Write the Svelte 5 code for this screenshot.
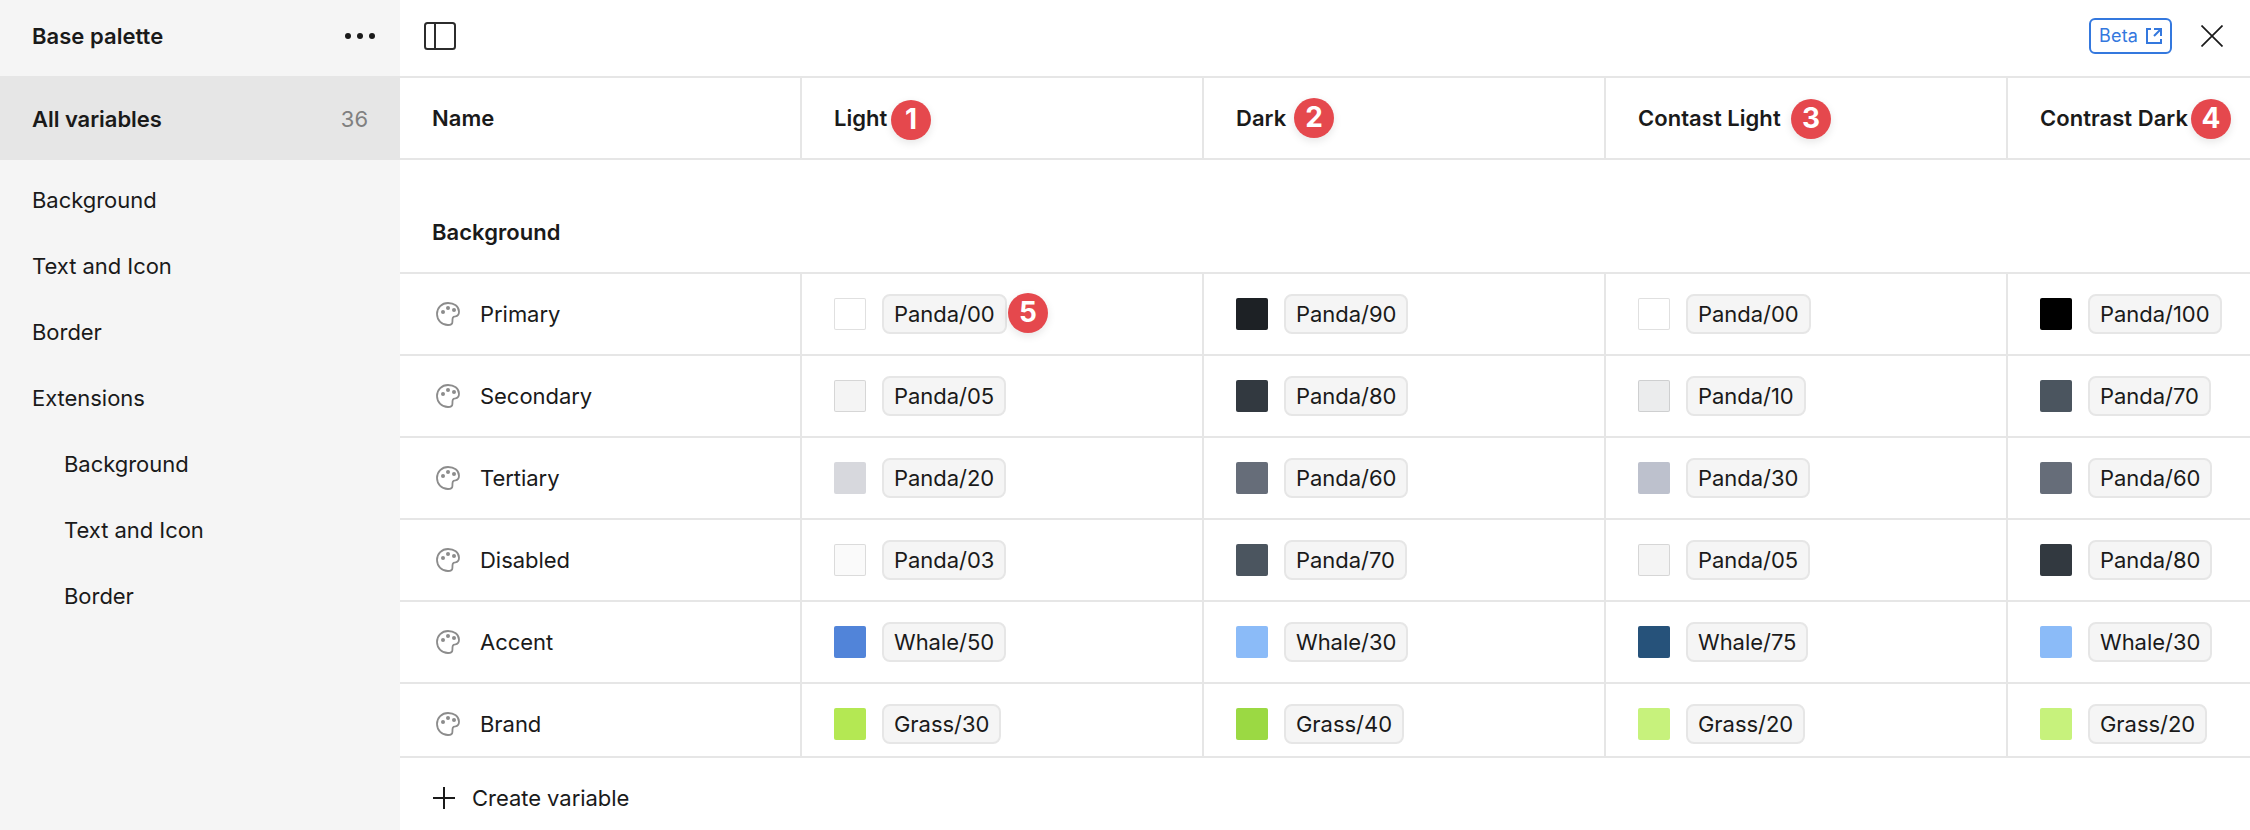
<script>
  const groups = [
    { label: 'Background' },
    { label: 'Text and Icon' },
    { label: 'Border' },
    { label: 'Extensions' },
    { label: 'Background', nested: true },
    { label: 'Text and Icon', nested: true },
    { label: 'Border', nested: true }
  ];

  const modes = [
    { label: 'Light', step: 1, x: 89, y: 22 },
    { label: 'Dark', step: 2, x: 90, y: 19.5 },
    { label: 'Contast Light', step: 3, x: 185, y: 21 },
    { label: 'Contrast Dark', step: 4, x: 183, y: 20.7 }
  ];

  const colors = {
    'Panda/00': '#ffffff',
    'Panda/03': '#fafafa',
    'Panda/05': '#f4f4f4',
    'Panda/10': '#ebeced',
    'Panda/20': '#d7d8dd',
    'Panda/30': '#bdc1cd',
    'Panda/60': '#666d79',
    'Panda/70': '#4b555f',
    'Panda/80': '#323940',
    'Panda/90': '#1d2125',
    'Panda/100': '#000000',
    'Whale/30': '#8bbbf8',
    'Whale/50': '#5184d9',
    'Whale/75': '#26527a',
    'Grass/20': '#c7f27c',
    'Grass/30': '#b4e853',
    'Grass/40': '#9bd943'
  };
  const outlined = ['Panda/00', 'Panda/03', 'Panda/05', 'Panda/10'];

  const rows = [
    { name: 'Primary', values: ['Panda/00', 'Panda/90', 'Panda/00', 'Panda/100'] },
    { name: 'Secondary', values: ['Panda/05', 'Panda/80', 'Panda/10', 'Panda/70'] },
    { name: 'Tertiary', values: ['Panda/20', 'Panda/60', 'Panda/30', 'Panda/60'] },
    { name: 'Disabled', values: ['Panda/03', 'Panda/70', 'Panda/05', 'Panda/80'] },
    { name: 'Accent', values: ['Whale/50', 'Whale/30', 'Whale/75', 'Whale/30'] },
    { name: 'Brand', values: ['Grass/30', 'Grass/40', 'Grass/20', 'Grass/20'] }
  ];
</script>

<div class="app">
  <aside>
    <header class="side-head">
      <span>Base palette</span>
      <svg width="32" height="8" viewBox="0 0 32 8" fill="#1a1a1a">
        <circle cx="4" cy="4" r="3" /><circle cx="16" cy="4" r="3" /><circle cx="28" cy="4" r="3" />
      </svg>
    </header>
    <div class="all"><span>All variables</span><span class="count">36</span></div>
    <nav>
      {#each groups as g}
        <div class="group" class:nested={g.nested}><span>{g.label}</span></div>
      {/each}
    </nav>
  </aside>

  <main>
    <header class="toolbar">
      <svg width="32" height="28" viewBox="0 0 32 28" fill="none" stroke="#2c2c2c" stroke-width="2">
        <rect x="1" y="1" width="30" height="26" rx="2.5" /><path d="M11 1v26" />
      </svg>
      <div class="tools">
        <div class="beta">
          <span>Beta</span>
          <svg width="16" height="16" viewBox="0 0 16 16" fill="none" stroke="#3478de" stroke-width="2">
            <path d="M5 1H1v14h14v-4M8 1h7v7M15 1 8 8" />
          </svg>
        </div>
        <svg width="22" height="22" viewBox="0 0 22 22" stroke="#1a1a1a" stroke-width="1.7">
          <path d="M.5.5l21 21M21.5.5l-21 21" />
        </svg>
      </div>
    </header>

    <div class="table">
      <div class="row head">
        <div class="cell name"><span>Name</span></div>
        {#each modes as m}
          <div class="cell">
            <span>{m.label}</span>
            <b class="step" style="left: {m.x}px; top: {m.y}px">{m.step}</b>
          </div>
        {/each}
      </div>
      <div class="section"><span>Background</span></div>
      {#each rows as r, i}
        <div class="row">
          <div class="cell name">
            <svg class="palette" width="24" height="24" viewBox="0 0 24 24">
              <path d="M12 1C5.800 1 1 5.900 1 12s4.800 11 11 11c2.700 0 4.400-1 4.400-3 0-4 .2-5.500 3-5.700C21.800 14 23 12.200 23 9.700 23 4.300 18 1 12 1Z" fill="none" stroke="#8c8c8c" stroke-width="1.8" />
              <g fill="#8c8c8c"><circle cx="7" cy="10" r="2" /><circle cx="12" cy="6" r="2" /><circle cx="18" cy="8" r="2" /></g>
            </svg>
            <span>{r.name}</span>
          </div>
          {#each r.values as v, j}
            <div class="cell">
              <i class="swatch" class:outlined={outlined.includes(v)} style="background-color: {colors[v]}"></i>
              <span class="pill">{v}</span>
              {#if i === 0 && j === 0}<b class="step" style="left: 206px; top: 18.5px">5</b>{/if}
            </div>
          {/each}
        </div>
      {/each}
    </div>

    <footer>
      <svg width="22" height="22" viewBox="0 0 22 22" stroke="#1a1a1a" stroke-width="2"><path d="M11 0v22M0 11h22" /></svg>
      <span>Create variable</span>
    </footer>
  </main>
</div>

<style>
  .app {
    display: flex;
    width: 2250px;
    height: 830px;
    overflow: hidden;
    background: #fff;
    color: #1a1a1a;
    font: 400 22px/32px Inter, sans-serif;
    letter-spacing: -0.04px;
    white-space: nowrap;
  }
  .app * { box-sizing: border-box; }
  svg { display: block; flex: none; }
  aside { width: 400px; flex: none; background: #f5f5f5; }
  .side-head {
    display: flex;
    align-items: center;
    justify-content: space-between;
    height: 76px;
    padding: 0 24px 4px 32px;
    font-weight: 600;
    letter-spacing: 0.04px;
  }
  .all {
    display: flex;
    align-items: center;
    justify-content: space-between;
    height: 84px;
    padding: 2px 32px 0;
    background: #e6e6e6;
    font-weight: 600;
  }
  .count { color: #808080; font-weight: 400; }
  nav { padding-top: 7px; }
  .group { display: flex; align-items: center; height: 66px; padding-left: 32px; }
  .nested { padding-left: 64px; }
  main { display: flex; flex-direction: column; width: 1850px; flex: none; }
  .toolbar {
    display: flex;
    align-items: center;
    justify-content: space-between;
    flex: none;
    height: 78px;
    padding: 0 27px 4px 24px;
    border-bottom: 2px solid #e6e6e6;
  }
  .tools { display: flex; align-items: center; gap: 29px; }
  .beta {
    display: flex;
    align-items: center;
    justify-content: space-between;
    width: 83px;
    height: 36px;
    padding: 0 8px;
    border: 2px solid #3478de;
    border-radius: 6px;
    color: #3478de;
    font-size: 18px;
    letter-spacing: 0.2px;
  }
  .table { height: 678px; flex: none; overflow: hidden; }
  .row {
    display: grid;
    grid-template-columns: 400px repeat(4, 402px);
    height: 82px;
    border-bottom: 2px solid #e6e6e6;
  }
  .head, .section { font-weight: 600; letter-spacing: 0.04px; }
  .cell {
    position: relative;
    display: flex;
    align-items: center;
    padding-left: 32px;
    border-left: 2px solid #e6e6e6;
  }
  .name { border-left: 0; }
  .section {
    display: flex;
    align-items: flex-end;
    height: 114px;
    padding: 0 0 24px 32px;
    border-bottom: 2px solid #e6e6e6;
  }
  .palette { margin: 0 20px 0 4px; }
  .swatch { width: 32px; height: 32px; border-radius: 2px; }
  .outlined { border: 1px solid rgba(0, 0, 0, 0.12); }
  .pill {
    height: 40px;
    margin-left: 16px;
    padding: 0 10px;
    border: 2px solid #e6e6e6;
    border-radius: 8px;
    background: #f5f5f5;
    line-height: 36px;
  }
  .step {
    position: absolute;
    width: 40px;
    height: 40px;
    border-radius: 50%;
    background: #e5484d;
    box-shadow: 0 3px 8px rgba(0, 0, 0, 0.1);
    color: #fff;
    font-size: 28px;
    font-weight: 700;
    line-height: 39px;
    text-align: center;
  }
  footer {
    display: flex;
    align-items: center;
    flex: 1;
    gap: 17px;
    padding: 8px 0 0 33px;
    border-top: 2px solid #e6e6e6;
  }
</style>
